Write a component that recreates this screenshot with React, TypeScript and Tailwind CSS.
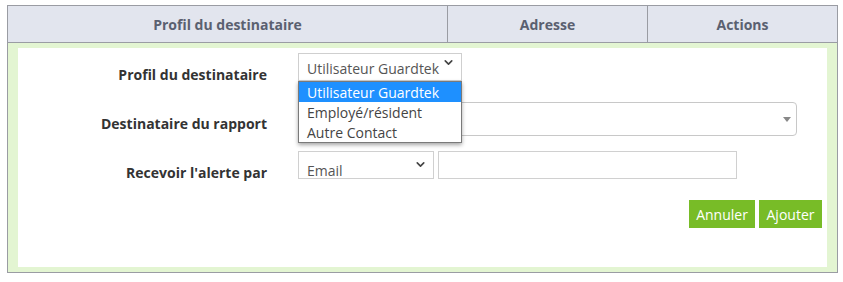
import { ChevronDown } from 'lucide-react';

const font = { fontFamily: '"Open Sans", "Liberation Sans", sans-serif' };

const options = ['Utilisateur Guardtek', 'Employé/résident', 'Autre Contact'];

export default function App() {
  return (
    <div className="w-[843px] h-[282px] bg-white pt-[5px] pl-[7px]" style={font}>
      <div className="w-[831px] border border-[#9a9ca3]">
        {/* en-tête du tableau */}
        <div className="grid grid-cols-[440px_200px_1fr] h-[37px] bg-[#e2e5ee] border-b border-[#9a9ca3] text-[14px] font-bold text-[#5a6070]">
          <div className="flex items-center justify-center border-r border-[#9a9ca3]">Profil du destinataire</div>
          <div className="flex items-center justify-center border-r border-[#9a9ca3]">Adresse</div>
          <div className="flex items-center justify-center">Actions</div>
        </div>

        <div className="bg-[#e3f5d2] pt-[5px] pb-[5px] px-[10px]">
          <div className="bg-white h-[219px] pt-[5px] relative">
            {/* ligne 1 */}
            <div className="flex h-[28px]">
              <div className="w-[249px] pt-[12px] text-right text-[14px] leading-[20px] font-bold text-[#333]">
                Profil du destinataire
              </div>
              <div className="ml-[31px] relative">
                <div className="w-[164px] h-[28px] border border-[#cfcfcf] flex items-center pl-[8px] pr-[6px] text-[14px] text-[#555]">
                  <span className="flex-1 pt-[2px]">Utilisateur Guardtek</span>
                  <ChevronDown size={13} strokeWidth={3} className="text-[#444] -mt-[10px]" />
                </div>
                <div className="absolute left-0 top-[28px] w-[164px] border border-[#7a7a7a] bg-white shadow-[0_2px_4px_rgba(0,0,0,0.35)] z-10 text-[14px]">
                  {options.map((o, i) => (
                    <div
                      key={o}
                      className={
                        i === 0
                          ? 'h-[20px] pt-[2px] leading-[18px] pl-[8px] bg-[#1e90ff] text-white'
                          : 'h-[20px] pt-[2px] leading-[18px] pl-[8px] text-[#444]'
                      }
                    >
                      {o}
                    </div>
                  ))}
                </div>
              </div>
            </div>

            {/* ligne 2 */}
            <div className="flex h-[34px] mt-[21px]">
              <div className="w-[249px] pt-[12px] text-right text-[14px] leading-[20px] font-bold text-[#333]">
                Destinataire du rapport
              </div>
              <div className="ml-[31px] w-[499px] h-[34px] border border-[#c8c8c8] rounded-[4px] flex items-center justify-end pr-[5px]">
                <svg width="8" height="5" viewBox="0 0 8 5">
                  <path d="M0 0 L8 0 L4 5 Z" fill="#888" />
                </svg>
              </div>
            </div>

            {/* ligne 3 */}
            <div className="flex h-[28px] mt-[15px]">
              <div className="w-[249px] pt-[12px] text-right text-[14px] leading-[20px] font-bold text-[#333]">
                Recevoir l'alerte par
              </div>
              <div className="ml-[31px] flex gap-[4px]">
                <div className="w-[136px] h-[28px] border border-[#d0d0d0] flex items-center pl-[8px] pr-[6px] text-[14px] text-[#555]">
                  <span className="flex-1 pt-[10px]">Email</span>
                  <ChevronDown size={13} strokeWidth={3} className="text-[#444] -mt-[2px]" />
                </div>
                <div className="w-[299px] h-[28px] border border-[#d0d0d0]" />
              </div>
            </div>

            {/* boutons */}
            <div className="flex justify-end gap-[4px] mt-[21px] pr-[5px]">
              <button className="h-[28px] w-[66px] bg-[#78bc27] text-white text-[14px]">Annuler</button>
              <button className="h-[28px] w-[63px] bg-[#78bc27] text-white text-[14px]">Ajouter</button>
            </div>
          </div>
        </div>
      </div>
    </div>
  );
}
